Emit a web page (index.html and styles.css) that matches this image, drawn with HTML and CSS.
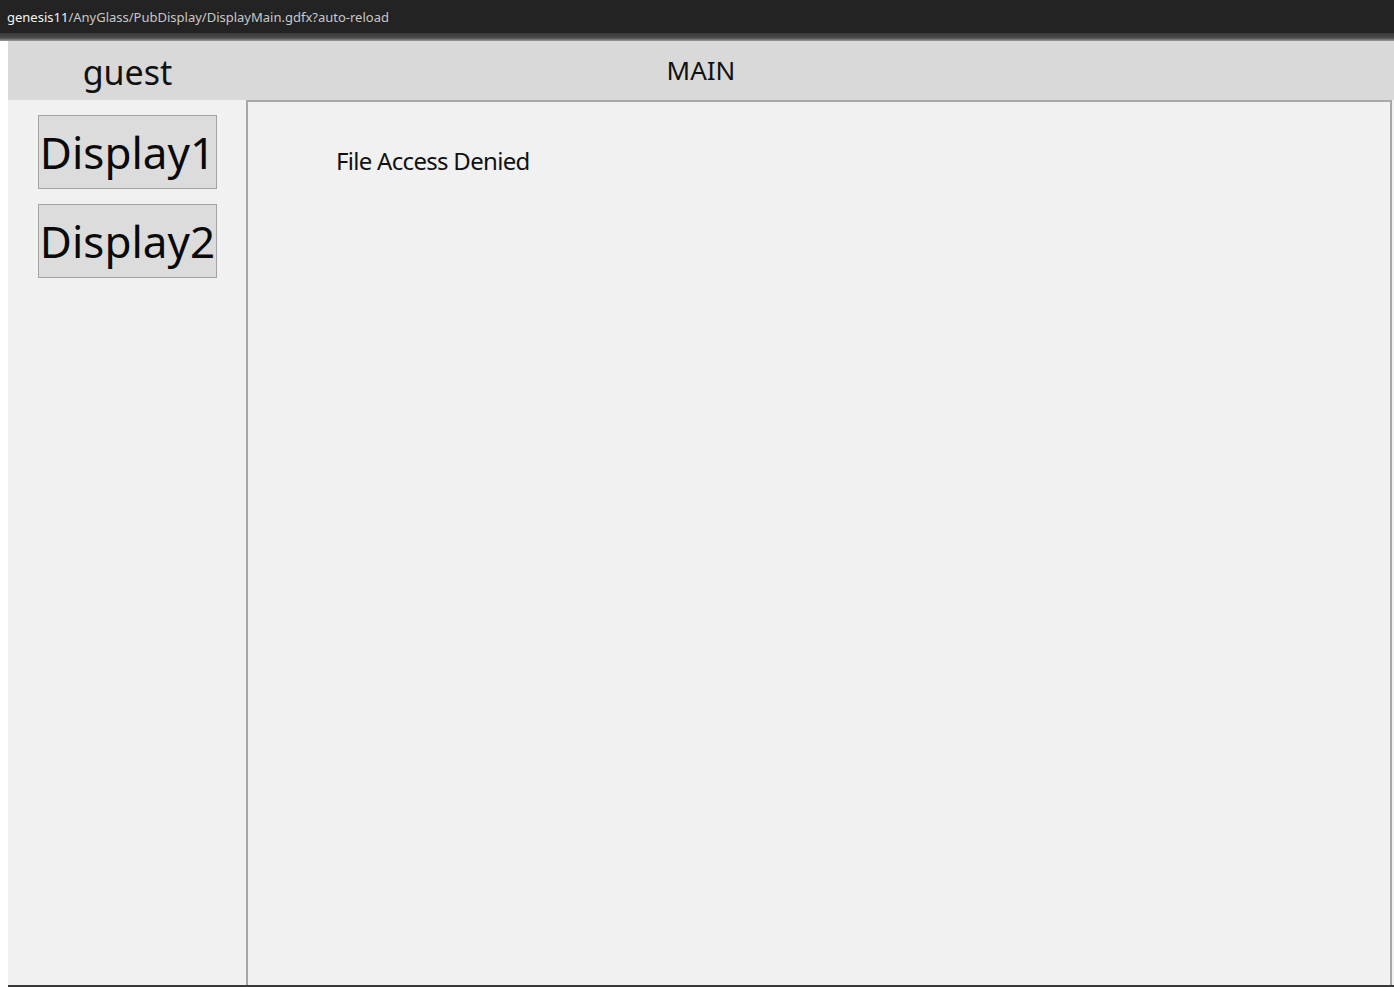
FILE: index.html
```html
<!DOCTYPE html>
<html>
<head>
<meta charset="utf-8">
<link rel="stylesheet" href="styles.css">
</head>
<body>
<div class="topbar"><span class="host">genesis11</span>/AnyGlass/PubDisplay/DisplayMain.gdfx?auto-reload</div>
<div class="shade"></div>
<div class="page">
  <div class="header">
    <div class="user">guest</div>
    <div class="title">MAIN</div>
  </div>
  <div class="body">
    <div class="side">
      <button class="btn">Display1</button>
      <button class="btn">Display2</button>
    </div>
    <div class="main">
      <div class="msg">File Access Denied</div>
    </div>
  </div>
</div>
</body>
</html>
```
FILE: styles.css
```css
html, body { margin: 0; padding: 0; height: 100%; }
body {
  font-family: "Noto Sans", "Open Sans", sans-serif;
  background: #ffffff;
  display: flex;
  flex-direction: column;
  overflow: hidden;
}
.topbar {
  height: 33px;
  background: #232323;
  color: #c8c8c8;
  font-size: 13px;
  line-height: 34px;
  padding-left: 7px;
  box-sizing: border-box;
}
.host { color: #f4f4f4; }
.shade {
  height: 8px;
  background: linear-gradient(#3a3a3a, #4a4a4a 60%, #9a9a9a);
}
.page {
  flex: 1;
  margin-left: 8px;
  display: flex;
  flex-direction: column;
  border-bottom: 2px solid #3a3a3a;
}
.header {
  height: 59px;
  background: #d9d9d9;
  display: grid;
  grid-template-columns: 239px 1fr 239px;
}
.user {
  text-align: center;
  font-size: 34px;
  line-height: 62px;
  color: #111;
}
.title {
  text-align: center;
  font-size: 26px;
  line-height: 58px;
  color: #111;
}
.body {
  flex: 1;
  display: flex;
  background: #f1f1f1;
}
.side {
  width: 238px;
  display: flex;
  flex-direction: column;
  gap: 15px;
  padding-top: 15px;
  padding-left: 30px;
  box-sizing: border-box;
}
.btn {
  width: 179px;
  height: 74px;
  background: #dcdcdc;
  border: 1px solid #a3a3a3;
  font-family: "Noto Sans", "Open Sans", sans-serif;
  font-size: 44px;
  color: #0a0a0a;
  padding: 0;
  line-height: 72px;
}
.main {
  width: 1146px;
  border-left: 2px solid #a8a8a8;
  border-top: 2px solid #a8a8a8;
  border-right: 2px solid #a8a8a8;
  background: #f1f1f1;
  box-sizing: border-box;
}
.msg {
  font-size: 24px;
  letter-spacing: -0.7px;
  color: #111;
  margin-left: 88px;
  margin-top: 42px;
}
```
